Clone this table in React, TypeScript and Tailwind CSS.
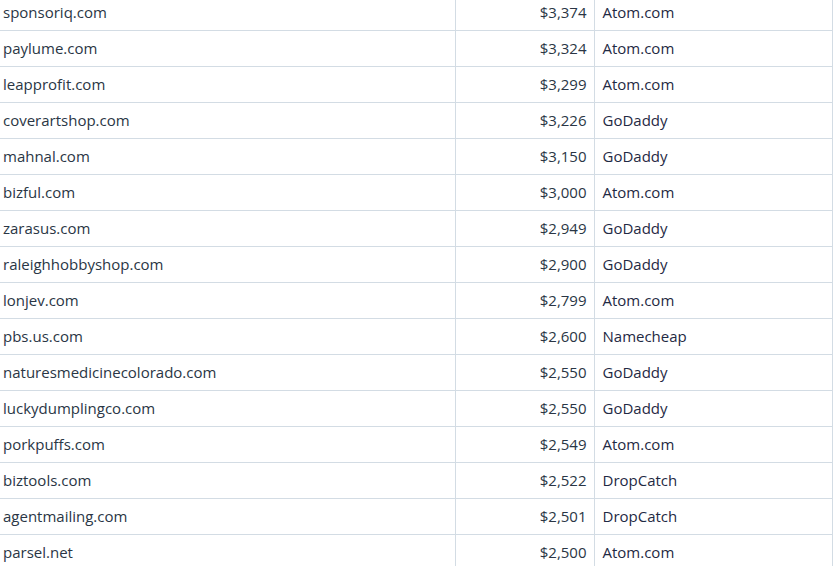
import React from "react";

const rows: [string, string, string][] = [
  ["sponsoriq.com", "$3,374", "Atom.com"],
  ["paylume.com", "$3,324", "Atom.com"],
  ["leapprofit.com", "$3,299", "Atom.com"],
  ["coverartshop.com", "$3,226", "GoDaddy"],
  ["mahnal.com", "$3,150", "GoDaddy"],
  ["bizful.com", "$3,000", "Atom.com"],
  ["zarasus.com", "$2,949", "GoDaddy"],
  ["raleighhobbyshop.com", "$2,900", "GoDaddy"],
  ["lonjev.com", "$2,799", "Atom.com"],
  ["pbs.us.com", "$2,600", "Namecheap"],
  ["naturesmedicinecolorado.com", "$2,550", "GoDaddy"],
  ["luckydumplingco.com", "$2,550", "GoDaddy"],
  ["porkpuffs.com", "$2,549", "Atom.com"],
  ["biztools.com", "$2,522", "DropCatch"],
  ["agentmailing.com", "$2,501", "DropCatch"],
  ["parsel.net", "$2,500", "Atom.com"],
];

export default function App() {
  return (
    <div className="w-[835px] h-[566px] overflow-hidden bg-white" style={{ fontFamily: '"Open Sans", sans-serif' }}>
      <table className="-mt-[6px] w-[832px] border-collapse table-fixed text-[15px] text-[#2a3645]">
        <colgroup>
          <col className="w-[455px]" />
          <col className="w-[139px]" />
          <col className="w-[238px]" />
        </colgroup>
        <tbody>
          {rows.map(([domain, price, venue]) => (
            <tr key={domain} className="h-[36px] border-b border-[#d3dce4]">
              <td className="pl-[3px] pr-2 border-r border-[#d3dce4] whitespace-nowrap">{domain}</td>
              <td className="pr-[7px] text-right border-r border-[#d3dce4]">{price}</td>
              <td className="pl-2 border-r border-[#d3dce4] text-[#1f2a44]">{venue}</td>
            </tr>
          ))}
        </tbody>
      </table>
    </div>
  );
}
